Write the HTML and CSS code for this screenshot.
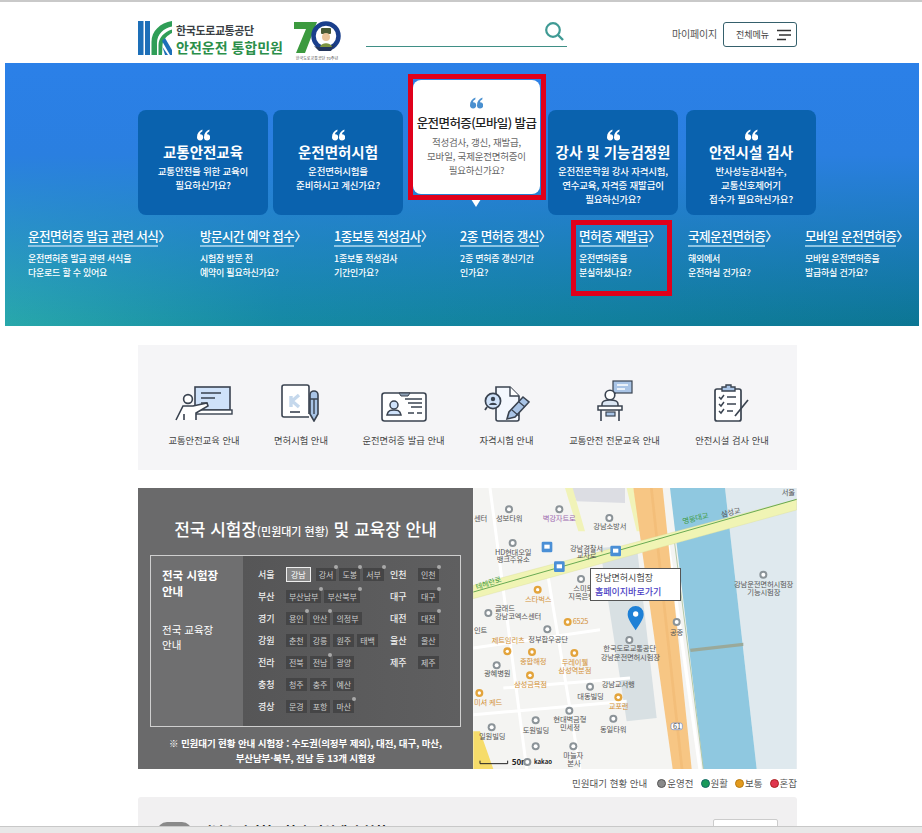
FILE: index.html
```html
<!DOCTYPE html>
<html lang="ko">

<head>
    <meta charset="UTF-8">
    <meta name="viewport" content="width=device-width, initial-scale=1.0">
    <title>안전운전 통합민원</title>
    <link rel="stylesheet" href="styles.css">
</head>

<body>
    <svg class="sprite" width="0" height="0">
        <symbol id="quote" viewBox="0 0 13 11">
            <path d="M0 7.7C0 4 2 1.2 5.4 0V1.8C3.9 2.6 3.2 3.6 3 4.7A3.1 3.1 0 1 1 0 7.7Z" />
            <path d="M7 7.7C7 4 9 1.2 12.4 0V1.8C10.9 2.6 10.2 3.6 10 4.7A3.1 3.1 0 1 1 7 7.7Z" />
        </symbol>
    </svg>

    <header class="site-header">
        <a class="logo">
            <svg class="logo-mark" viewBox="0 0 34 34">
                <rect x="0" y="0" width="5.5" height="34" fill="#1d6fb8" />
                <rect x="7" y="0" width="5" height="34" fill="#1d6fb8" />
                <path d="M13.5 34V21C13.5 10 22 2 34 0V5.5C26 7 19 13 19 22V34Z" fill="#2f9e57" />
                <path d="M20.5 34V24C20.5 17 26 11 34 8.5V12C30 14 25 18 24.5 24L24 34Z" fill="#2f9e57" />
                <path d="M24 20L27 17L34 29V34H32Z" fill="#1d6fb8" />
                <path d="M24.5 26L27 34H30Z" fill="#1d6fb8" />
            </svg>
            <span class="logo-text">
                <span class="logo-org">한국도로교통공단</span>
                <span class="logo-name">안전운전 통합민원</span>
            </span>
            <span class="logo-seventy">
                <svg viewBox="0 0 48 34" width="48" height="34">
                    <path d="M1 1H24L12 32H3L13 8H1Z" fill="#3c9a3f" />
                    <circle cx="33" cy="15" r="12.5" fill="#fff" stroke="#1a3f8c" stroke-width="4.5" />
                    <path d="M21 25C26 27 38 27 43 22L38 30H26Z" fill="#24365c" />
                    <rect x="28" y="7" width="10" height="6" rx="1" fill="#4a5a35" />
                    <circle cx="33" cy="16" r="4" fill="#e9c39a" />
                    <path d="M27 26C28 21 38 21 39 26Z" fill="#7c9440" />
                </svg>
                <small>한국도로교통공단 70주년</small>
            </span>
        </a>
        <div class="search-box">
            <svg viewBox="0 0 20 20" width="20" height="20">
                <circle cx="9" cy="9" r="6.8" fill="none" stroke="#3f9a94" stroke-width="2.2" />
                <path d="M14 14L19 19" stroke="#3f9a94" stroke-width="2.4" />
            </svg>
        </div>
        <a class="mypage">마이페이지</a>
        <button class="menu-btn">전체메뉴
            <svg viewBox="0 0 16 12" width="16" height="12">
                <path d="M1 1.5H15M3 6H15M1 10.5H10" stroke="#333" stroke-width="1.6" />
            </svg>
        </button>
    </header>

    <section class="hero">
        <div class="card-row">
            <div class="card">
                <svg class="quote"><use href="#quote" /></svg>
                <h3>교통안전교육</h3>
                <p>교통안전을 위한 교육이<br>필요하신가요?</p>
            </div>
            <div class="card">
                <svg class="quote"><use href="#quote" /></svg>
                <h3>운전면허시험</h3>
                <p>운전면허시험을<br>준비하시고 계신가요?</p>
            </div>
            <div class="card active">
                <svg class="quote"><use href="#quote" /></svg>
                <h3>운전면허증(모바일) 발급</h3>
                <p>적성검사, 갱신, 재발급,<br>모바일, 국제운전면허증이<br>필요하신가요?</p>
            </div>
            <div class="card">
                <svg class="quote"><use href="#quote" /></svg>
                <h3>강사 및 기능검정원</h3>
                <p>운전전문학원 강사 자격시험,<br>연수교육, 자격증 재발급이<br>필요하신가요?</p>
            </div>
            <div class="card">
                <svg class="quote"><use href="#quote" /></svg>
                <h3>안전시설 검사</h3>
                <p>반사성능검사접수,<br>교통신호제어기<br>접수가 필요하신가요?</p>
            </div>
        </div>

        <div class="link-row">
            <div class="link-item w1">
                <h4><span>운전면허증 발급 관련 서식</span>〉</h4>
                <p>운전면허증 발급 관련 서식을<br>다운로드 할 수 있어요</p>
            </div>
            <div class="link-item w2">
                <h4><span>방문시간 예약 접수</span>〉</h4>
                <p>시험장 방문 전<br>예약이 필요하신가요?</p>
            </div>
            <div class="link-item w3">
                <h4><span>1종보통 적성검사</span>〉</h4>
                <p>1종보통 적성검사<br>기간인가요?</p>
            </div>
            <div class="link-item w4">
                <h4><span>2종 면허증 갱신</span>〉</h4>
                <p>2종 면허증 갱신기간<br>인가요?</p>
            </div>
            <div class="link-item w5">
                <h4><span>면허증 재발급</span>〉</h4>
                <p>운전면허증을<br>분실하셨나요?</p>
            </div>
            <div class="link-item w6">
                <h4><span>국제운전면허증</span>〉</h4>
                <p>해외에서<br>운전하실 건가요?</p>
            </div>
            <div class="link-item w7">
                <h4><span>모바일 운전면허증</span>〉</h4>
                <p>모바일 운전면허증을<br>발급하실 건가요?</p>
            </div>
        </div>

        <!-- annotation boxes from the screenshot -->
        <div class="mark mark-card"></div>
        <div class="mark mark-link"></div>
    </section>

    <main class="content">
        <section class="guide-panel">
            <div class="guide-item">
                <svg viewBox="0 0 58 36" width="58" height="36">
                    <rect x="20" y="1" width="35" height="23" fill="#cfe2fa" stroke="#3a4350" stroke-width="1.6" />
                    <path d="M26 7H46M26 12H40M26 17H32" stroke="#3a4350" stroke-width="1.6" />
                    <rect x="18" y="24" width="39" height="4" fill="#fff" stroke="#3a4350" stroke-width="1.4" />
                    <circle cx="13" cy="13" r="4.4" fill="#fff" stroke="#3a4350" stroke-width="1.6" />
                    <path d="M1 34L8 20H18L32 17L33 20L21 27V34M9 34V28" fill="#fff" stroke="#3a4350" stroke-width="1.6" />
                </svg>
                <span>교통안전교육 안내</span>
            </div>
            <div class="guide-item">
                <svg viewBox="0 0 40 38" width="40" height="38">
                    <path d="M28 30V3A2 2 0 0 0 26 1H3A2 2 0 0 0 1 3V31A2 2 0 0 0 3 33H28" fill="#fff" stroke="#3a4350" stroke-width="1.6" />
                    <path d="M10 12V23M11 17L18 11M11 17L18 23" stroke="#c5d8ec" stroke-width="3.4" fill="none" />
                    <path d="M9 28H19" stroke="#3a4350" stroke-width="1.6" />
                    <path d="M29 11A4 4 0 0 1 37 11V30L33 37L29 30Z" fill="#a9c4e6" stroke="#3a4350" stroke-width="1.6" />
                    <path d="M29 15H37M33 15V30" stroke="#3a4350" stroke-width="1.4" />
                </svg>
                <span>면허시험 안내</span>
            </div>
            <div class="guide-item">
                <svg viewBox="0 0 46 32" width="46" height="32">
                    <rect x="1" y="3" width="44" height="28" rx="2.5" fill="#fff" stroke="#3a4350" stroke-width="1.6" />
                    <path d="M18 3L20 6H27L29 3Z" fill="#8da0b5" stroke="#3a4350" stroke-width="1" />
                    <circle cx="13" cy="15" r="4" fill="#cfe2fa" stroke="#3a4350" stroke-width="1.5" />
                    <path d="M6 25C7 20 10 20 13 20S19 20 20 25Z" fill="#cfe2fa" stroke="#3a4350" stroke-width="1.5" />
                    <path d="M24 9H41M27 13H41M30 17H41M27 23H33M36 23H41" stroke="#3a4350" stroke-width="1.4" />
                </svg>
                <span>운전면허증 발급 안내</span>
            </div>
            <div class="guide-item">
                <svg viewBox="0 0 46 36" width="46" height="36">
                    <path d="M12 1H26L35 10V33A2 2 0 0 1 33 35H14A2 2 0 0 1 12 33Z" fill="#f4f8fe" stroke="#3a4350" stroke-width="1.6" />
                    <path d="M26 1V10H35" fill="#fff" stroke="#3a4350" stroke-width="1.4" />
                    <circle cx="9" cy="15" r="7.6" fill="#cfe2fa" stroke="#3a4350" stroke-width="1.7" />
                    <circle cx="9" cy="13" r="2.2" fill="#3a4350" />
                    <path d="M5 19C6 16 12 16 13 19Z" fill="#3a4350" />
                    <path d="M3 21L1 24" stroke="#3a4350" stroke-width="1.8" />
                    <path d="M39 11L45 16L31 31L23 33L25 26Z" fill="#a9c4e6" stroke="#3a4350" stroke-width="1.6" />
                    <path d="M28 24L35 30M35 16L41 21" stroke="#3a4350" stroke-width="1.2" />
                </svg>
                <span>자격시험 안내</span>
            </div>
            <div class="guide-item">
                <svg viewBox="0 0 36 42" width="36" height="42">
                    <rect x="16" y="1" width="19" height="12" fill="#a9c4e6" stroke="#3a4350" stroke-width="1.2" />
                    <path d="M20 5H31M20 9H28" stroke="#fff" stroke-width="1.3" />
                    <path d="M16 13L13 17L19 13" fill="#a9c4e6" stroke="#3a4350" stroke-width="1" />
                    <circle cx="13" cy="15" r="4.8" fill="#fff" stroke="#3a4350" stroke-width="1.6" />
                    <path d="M5 26V24C5 21 9 20 13 20S21 21 21 24V26" fill="#dbe6f3" stroke="#3a4350" stroke-width="1.5" />
                    <path d="M1 26H25V30H1Z" fill="#fff" stroke="#3a4350" stroke-width="1.5" />
                    <path d="M4 30V41M22 30V41" stroke="#3a4350" stroke-width="1.6" />
                    <rect x="9" y="32" width="9" height="4" fill="#a9c4e6" stroke="#3a4350" stroke-width="1.2" />
                </svg>
                <span>교통안전 전문교육 안내</span>
            </div>
            <div class="guide-item">
                <svg viewBox="0 0 36 38" width="36" height="38">
                    <rect x="1" y="5" width="26" height="32" rx="2" fill="#fff" stroke="#3a4350" stroke-width="1.7" />
                    <path d="M8 7V3H12V1H17V3H21V7Z" fill="#a9c4e6" stroke="#3a4350" stroke-width="1.4" />
                    <path d="M5 13L7 15L10 11M5 20L7 22L10 18M5 27L7 29L10 25" fill="none" stroke="#3a4350" stroke-width="1.5" />
                    <path d="M13 13H22M13 20H22M13 27H19" stroke="#3a4350" stroke-width="1.5" />
                    <path d="M34 16L21 32" stroke="#3a4350" stroke-width="1.7" />
                </svg>
                <span>안전시설 검사 안내</span>
            </div>
        </section>

        <section class="center-panel">
            <div class="center-info">
                <h2>전국 시험장<small>(민원대기 현황)</small> 및 교육장 안내</h2>
                <div class="center-box">
                    <div class="center-side">
                        <strong>전국 시험장<br>안내</strong>
                        <span>전국 교육장<br>안내</span>
                    </div>
                    <div class="center-list">
                        <div class="area-col">
                            <div class="area"><b>서울</b><i class="on">강남</i><i class="dot">강서</i><i class="dot">도봉</i><i class="dot">서부</i></div>
                            <div class="area"><b>부산</b><i class="dot">부산남부</i><i class="dot">부산북부</i></div>
                            <div class="area"><b>경기</b><i class="dot">용인</i><i class="dot">안산</i><i>의정부</i></div>
                            <div class="area"><b>강원</b><i>춘천</i><i>강릉</i><i>원주</i><i>태백</i></div>
                            <div class="area"><b>전라</b><i>전북</i><i class="dot">전남</i><i>광양</i></div>
                            <div class="area"><b>충청</b><i>청주</i><i>충주</i><i>예산</i></div>
                            <div class="area"><b>경상</b><i>문경</i><i>포항</i><i class="dot">마산</i></div>
                        </div>
                        <div class="area-col">
                            <div class="area"><b>인천</b><i class="dot">인천</i></div>
                            <div class="area"><b>대구</b><i class="dot">대구</i></div>
                            <div class="area"><b>대전</b><i class="dot">대전</i></div>
                            <div class="area"><b>울산</b><i>울산</i></div>
                            <div class="area"><b>제주</b><i>제주</i></div>
                        </div>
                    </div>
                </div>
                <p class="center-note">※ 민원대기 현황 안내 시험장 : 수도권(의정부 제외), 대전, 대구, 마산,<br>부산남부·북부, 전남 등 13개 시험장</p>
            </div>

            <div class="map">
                <svg class="map-svg" viewBox="10 0 970 843">
                    <defs>
                        <g id="poi"><circle r="12" fill="#8b9398" /><circle r="6" fill="#fff" /></g>
                        <g id="poi-o"><circle r="12" fill="#e3a43c" /><circle r="5" fill="#fff" /></g>
                        <g id="bus"><rect x="-16" y="-16" width="32" height="32" rx="4" fill="#4a8fd6" /><rect x="-8" y="-7" width="16" height="12" fill="#fff" /></g>
                    </defs>
                    <rect x="10" y="0" width="970" height="843" fill="#f4f4f2" />
                    <!-- river and bank -->
                    <path d="M765 0H980V843H860Z" fill="#dfe9ee" />
                    <path d="M600 0H765L860 843H700Z" fill="#8fc8e0" />
                    <path d="M660 482L820 464V474L662 492Z" fill="#9aa99a" />
                    <!-- blocks and side roads -->
                    <path d="M390 180L500 170L560 690L470 700Z" fill="#d8e0e3" />
                    <path d="M300 0H465V45L320 40Z" fill="#dcdde3" />
                    <path d="M10 730H30L70 843H10Z" fill="#f6dc6a" />
                    <path d="M60 0L170 843M230 240L330 843M10 480L390 425M100 600L480 570M10 680L470 640" stroke="#fff" stroke-width="9" fill="none" />
                    <path d="M590 140L690 843" stroke="#fff" stroke-width="10" fill="none" />
                    <path d="M612 150L700 843" stroke="#b5c9a8" stroke-width="3" fill="none" />
                    <!-- main roads -->
                    <path d="M285 0H308L345 130H325Z" fill="#f1f3b8" />
                    <path d="M470 0H490L520 130H500Z" fill="#f1f3b8" />
                    <path d="M490 0H578L665 843H608Z" fill="#f7c684" />
                    <path d="M540 0H548L640 843H632Z" fill="#eeb26a" opacity="0.4" />
                    <path d="M10 292L980 34V66L10 332Z" fill="#f0f4b4" stroke="#d8dc9c" stroke-width="1" />
                    <path d="M10 312L980 34" stroke="#4d9a3e" stroke-width="2.5" />
                    <text x="640" y="108" class="m g" transform="rotate(-14 640 108)">영동대교</text>
                    <text x="755" y="88" class="m" transform="rotate(-14 755 88)">삼성교</text>
                    <text x="935" y="22" class="m">서울</text>
                    <text x="20" y="305" class="m g" transform="rotate(-18 20 305)">테헤란로</text>

                    <use href="#poi" x="117" y="64" /><text x="78" y="98" class="m">성보타워</text><text x="12" y="100" class="m">센터</text>
                    <use href="#poi" x="268" y="64" /><text x="218" y="98" class="m pu">벽강자트로</text>
                    <use href="#poi" x="418" y="90" /><text x="370" y="124" class="m">강남소방서</text>
                    <use href="#poi" x="128" y="165" /><text x="75" y="200" class="m">HD현대오일</text><text x="80" y="222" class="m">뱅크주유소</text>
                    <use href="#bus" x="231" y="177" /><use href="#bus" x="437" y="189" /><use href="#bus" x="268" y="236" />
                    <text x="300" y="188" class="m">강남경찰서</text><text x="320" y="210" class="m">교차로</text>
                    <use href="#poi" x="333" y="273" /><text x="310" y="310" class="m">스미토</text><text x="295" y="332" class="m">지옥은행</text>
                    <use href="#poi-o" x="203" y="305" /><text x="165" y="342" class="m o">스타벅스</text>
                    <use href="#poi" x="55" y="375" /><text x="75" y="370" class="m">글래드</text><text x="75" y="392" class="m">강남코엑스센터</text>
                    <use href="#poi-o" x="293" y="402" /><text x="308" y="409" class="m o">6525</text>
                    <use href="#poi" x="232" y="424" /><text x="175" y="462" class="m">정부합우공단</text>
                    <text x="65" y="465" class="m o">제트임리츠</text><use href="#poi-o" x="112" y="490" />
                    <text x="12" y="435" class="m">인트</text>
                    <use href="#poi-o" x="186" y="492" /><text x="150" y="528" class="m o">종합해정</text>
                    <use href="#poi-o" x="313" y="495" /><text x="275" y="532" class="m o">두레이웰</text><text x="265" y="555" class="m o">삼성역분점</text>
                    <use href="#poi" x="80" y="532" /><text x="42" y="565" class="m">광혜병원</text>
                    <use href="#poi-o" x="180" y="562" /><text x="132" y="598" class="m o">삼성금욕점</text>
                    <use href="#poi" x="360" y="596" /><text x="395" y="597" class="m">강남교서행</text><text x="322" y="632" class="m">대동빌딩</text>
                    <use href="#poi-o" x="28" y="615" /><text x="12" y="652" class="m o">미셔 케드</text>
                    <use href="#poi-o" x="445" y="628" /><text x="416" y="662" class="m o">교포런</text>
                    <use href="#poi" x="298" y="668" /><text x="250" y="702" class="m">현대벽금형</text><text x="270" y="727" class="m">민세정</text>
                    <use href="#poi" x="197" y="697" /><text x="158" y="734" class="m">도원빌딩</text>
                    <use href="#poi" x="430" y="692" /><text x="390" y="732" class="m">동일타워</text>
                    <use href="#poi" x="65" y="718" /><text x="27" y="754" class="m">일원빌딩</text>
                    <use href="#poi" x="197" y="775" />
                    <use href="#poi" x="310" y="775" /><text x="280" y="811" class="m">마늘자</text><text x="292" y="835" class="m">본사</text>
                    <use href="#poi" x="620" y="402" /><text x="600" y="440" class="m">공종</text>
                    <use href="#poi" x="478" y="456" /><text x="400" y="490" class="m">한국도로교통공단</text><text x="392" y="515" class="m">강남운전면허시험장</text>
                    <use href="#poi" x="880" y="260" /><text x="792" y="296" class="m">강남운전면허시험장</text><text x="832" y="320" class="m">기능시험장</text>
                    <rect x="603" y="705" width="34" height="20" rx="6" fill="#fff" stroke="#6d86c8" stroke-width="2" />
                    <text x="609" y="722" class="m" fill="#3957a8">61</text>
                    <path d="M30 818V827H113V818" fill="none" stroke="#222" stroke-width="3" />
                    <text x="125" y="832" class="scale">50m</text>
                    <use href="#poi" x="172" y="822" />
                    <text x="192" y="828" class="scale kakao">kakao</text>
                    <!-- marker -->
                    <path d="M497 427C480 400 473 392 473 378A24 24 0 0 1 521 378C521 392 514 400 497 427Z" fill="#1e80d6" />
                    <circle cx="497" cy="378" r="8" fill="#fff" />
                </svg>
                <div class="map-tip">
                    <span>강남면허시험장</span>
                    <a>홈페이지바로가기</a>
                </div>
            </div>
        </section>

        <div class="legend">
            <span class="legend-title">민원대기 현황 안내</span>
            <span class="legend-item"><i class="gray"></i>운영전</span>
            <span class="legend-item"><i class="green"></i>원활</span>
            <span class="legend-item"><i class="orange"></i>보통</span>
            <span class="legend-item"><i class="red"></i>혼잡</span>
        </div>

        <section class="status-panel">
            <span class="status-pill"></span>
            <h3>전남운전면허시험장 민원대기 현황</h3>
            <span class="status-btn"></span>
        </section>
    </main>

    <div class="bottom-bar"></div>
</body>

</html>
```

FILE: styles.css
```css
/* General Reset */
* {
    margin: 0;
    padding: 0;
    box-sizing: border-box;
}

html,
body {
    height: 833px;
    overflow: hidden;
}

body {
    font-family: "Noto Sans CJK KR", "Noto Sans", sans-serif;
    background: #fff;
    color: #333;
    border-top: 2px solid #c9c9c9;
}

.sprite {
    display: block;
}

/* Header */
.site-header {
    display: flex;
    align-items: flex-start;
    height: 61px;
    padding: 19px 0 0 138px;
}

.logo {
    display: flex;
    width: 228px;
}

.logo-mark {
    width: 34px;
    height: 34px;
}

.logo-text {
    display: flex;
    flex-direction: column;
    margin-left: 4px;
    width: 117px;
    white-space: nowrap;
}

.logo-org {
    font-size: 11px;
    line-height: 15px;
    font-weight: 700;
    letter-spacing: -0.4px;
    color: #3a3f44;
    margin-top: 2px;
}

.logo-name {
    font-size: 14px;
    line-height: 18px;
    font-weight: 700;
    letter-spacing: 0;
    color: #2b8f4a;
}

.logo-seventy {
    display: flex;
    flex-direction: column;
    align-items: center;
    width: 48px;
    white-space: nowrap;
}

.logo-seventy small {
    font-size: 4px;
    line-height: 6px;
    color: #555;
}

.search-box {
    display: flex;
    justify-content: flex-end;
    width: 201px;
    height: 26px;
    padding-right: 3px;
    border-bottom: 1px solid #3f8f86;
    margin-left: 0;
}

.mypage {
    font-size: 10px;
    line-height: 26px;
    color: #555;
    letter-spacing: -0.2px;
    margin-left: 105px;
    white-space: nowrap;
}

.menu-btn {
    display: flex;
    align-items: center;
    justify-content: space-between;
    width: 74px;
    height: 25px;
    margin: 1px 0 0 6px;
    padding: 0 4px 0 12px;
    background: #fff;
    border: 1px solid #35606c;
    border-radius: 3px;
    font-family: inherit;
    font-size: 9px;
    color: #444;
    white-space: nowrap;
}

/* Hero */
.hero {
    position: relative;
    height: 263px;
    margin: 0 3px 0 5px;
    background:
        linear-gradient(to bottom, #2b80e8 0%, #2a7fe0 35%, rgba(42, 127, 224, 0) 100%),
        linear-gradient(to right, #28a8aa 0%, #158aa3 30%, #0c7693 100%);
}

.card-row {
    display: flex;
    align-items: flex-start;
    padding: 17px 0 0 133px;
}

.card {
    position: relative;
    width: 130px;
    height: 105px;
    margin: 30px 5px 0 0;
    padding-top: 19px;
    background: #0a62ae;
    border-radius: 8px;
    color: #fff;
    text-align: center;
}

.card:nth-child(4) {
    margin-right: 8px;
}

.quote {
    display: block;
    width: 13px;
    height: 12px;
    margin: 0 auto 1px;
    fill: #fff;
}

.card h3 {
    font-size: 14.5px;
    line-height: 20px;
    font-weight: 700;
    white-space: nowrap;
}

.card p {
    font-size: 9.5px;
    line-height: 14px;
    font-weight: 500;
    letter-spacing: -0.2px;
    margin-top: 2px;
    white-space: nowrap;
}

.card.active {
    width: 127px;
    height: 114px;
    margin: 0 8px 0 5px;
    padding-top: 17px;
    background: #fff;
    color: #222;
}

.card.active .quote {
    fill: #4a90d0;
}

.card.active h3 {
    font-size: 12.5px;
    font-weight: 500;
    letter-spacing: -0.6px;
    margin-top: 4px;
}

.card.active p {
    color: #666;
    font-weight: 400;
}

.card.active::after {
    content: "";
    position: absolute;
    left: 58px;
    bottom: -13px;
    border-left: 5px solid transparent;
    border-right: 5px solid transparent;
    border-top: 8px solid #fff;
}

.link-row {
    display: flex;
    gap: 29px;
    margin-top: 12px;
    padding-left: 23px;
    color: #fff;
}

.link-item {
    flex: none;
    white-space: nowrap;
}

.w1 { width: 143px; }
.w2 { width: 105px; }
.w3 { width: 97px; }
.w4 { width: 90px; }
.w5 { width: 80px; }
.w6 { width: 88px; }
.w7 { width: 102px; }

.link-item h4 {
    font-size: 12.6px;
    line-height: 17px;
    font-weight: 500;
    letter-spacing: -0.55px;
    display: flex;
}

.link-item h4 span {
    border-bottom: 2px solid #8cc4e4;
    padding-bottom: 1px;
}

.link-item p {
    font-size: 9px;
    line-height: 14px;
    font-weight: 500;
    letter-spacing: -0.25px;
    margin-top: 5px;
}

.mark {
    position: absolute;
    border: 5px solid #e0001b;
}

.mark-card {
    left: 403px;
    top: 11px;
    width: 138px;
    height: 126px;
}

.mark-link {
    left: 566px;
    top: 157px;
    width: 101px;
    height: 76px;
}

/* Content */
.content {
    width: 659px;
    margin: 19px 0 0 138px;
}

.guide-panel {
    display: flex;
    gap: 34px;
    height: 125px;
    padding-left: 30px;
    background: #f5f5f7;
}

.guide-item {
    flex: none;
    display: flex;
    flex-direction: column;
    align-items: center;
    justify-content: flex-end;
    height: 102px;
}

.guide-item span {
    margin-top: 12px;
    font-size: 9.3px;
    line-height: 13px;
    color: #444;
    white-space: nowrap;
}

.guide-item:nth-child(1) { width: 72px; }
.guide-item:nth-child(2) { width: 54px; }
.guide-item:nth-child(3) { width: 83px; }
.guide-item:nth-child(4) { width: 55px; }
.guide-item:nth-child(5) { width: 93px; }
.guide-item:nth-child(6) { width: 74px; }

.center-panel {
    display: flex;
    height: 281px;
    margin-top: 18px;
}

.center-info {
    width: 335px;
    padding: 28px 12px 0;
    background: #6a6a6b;
    color: #fff;
    text-align: center;
}

.center-info h2 {
    font-size: 17px;
    line-height: 25px;
    font-weight: 500;
    white-space: nowrap;
}

.center-info h2 small {
    font-size: 11px;
    font-weight: 500;
}

.center-box {
    display: flex;
    height: 172px;
    margin-top: 11px;
    border: 1px solid #cfcfcf;
    text-align: left;
}

.center-side {
    display: flex;
    flex-direction: column;
    width: 92px;
    padding: 11px 0 0 11px;
    background: #6f6f70;
}

.center-side strong {
    font-size: 11.5px;
    line-height: 16px;
    font-weight: 700;
}

.center-side span {
    margin-top: 23px;
    font-size: 10.5px;
    line-height: 15px;
}

.center-list {
    flex: 1;
    display: flex;
    padding: 10px 0 0 15px;
    background: linear-gradient(to right, #565657, #5f5f60);
}

.area-col {
    display: flex;
    flex-direction: column;
    gap: 6px;
}

.area-col:first-child {
    width: 132px;
}

.area {
    display: flex;
    align-items: center;
    gap: 3px;
    height: 16px;
    white-space: nowrap;
}

.area b {
    width: 23px;
    margin-right: 2px;
    font-size: 9px;
    font-weight: 500;
    color: #eee;
}

.area i {
    position: relative;
    padding: 0 3px;
    height: 13px;
    background: #454546;
    font-size: 8px;
    font-style: normal;
    line-height: 13px;
    color: #ccc;
}

.area i.on {
    padding: 0 4px;
    height: 15px;
    line-height: 13px;
    margin-right: 2px;
    background: #888;
    border: 1px solid #eee;
    color: #fff;
}

.area i.dot::after {
    content: "";
    position: absolute;
    top: -3px;
    right: -2px;
    width: 4px;
    height: 4px;
    border-radius: 50%;
    background: #a9a9a9;
}

.center-note {
    margin-top: 9px;
    font-size: 9.5px;
    line-height: 14.5px;
    font-weight: 700;
    letter-spacing: -0.1px;
    white-space: nowrap;
}

.map {
    position: relative;
    width: 324px;
    overflow: hidden;
}

.map-svg {
    display: block;
    width: 324px;
    height: 281px;
}

.map-svg .m {
    font-size: 22px;
    fill: #555;
    letter-spacing: -0.5px;
}

.map-svg .o {
    fill: #d3923a;
}

.map-svg .pu {
    fill: #a06ab0;
}

.map-svg .g {
    fill: #3e9a3e;
}

.map-svg .scale {
    font-size: 24px;
    font-weight: 700;
    fill: #222;
}

.map-svg .kakao {
    font-size: 18px;
}

.map-tip {
    position: absolute;
    left: 117px;
    top: 80px;
    width: 91px;
    height: 33px;
    padding: 2px 0 0 4px;
    background: #fff;
    border: 1px solid #555;
    font-size: 9px;
    line-height: 14px;
    color: #444;
    white-space: nowrap;
}

.map-tip span,
.map-tip a {
    display: block;
}

.map-tip a {
    color: #4b3fc4;
    font-weight: 500;
}

.legend {
    display: flex;
    justify-content: flex-end;
    align-items: center;
    height: 28px;
    font-size: 9.5px;
    color: #555;
    white-space: nowrap;
}

.legend-title {
    margin-right: 10px;
}

.legend-item {
    display: flex;
    align-items: center;
    margin-left: 7px;
}

.legend-title + .legend-item {
    margin-left: 0;
}

.legend-item i {
    width: 9px;
    height: 9px;
    border-radius: 50%;
    margin-right: 1px;
    border: 1px solid #555;
}

.legend-item .gray { background: #8a8a8a; }
.legend-item .green { background: #1a9a5a; border-color: #166; }
.legend-item .orange { background: #e39a1c; border-color: #b87a10; }
.legend-item .red { background: #e0364e; border-color: #a22; }

.status-panel {
    position: relative;
    display: flex;
    align-items: flex-start;
    height: 60px;
    padding: 25px 0 0 19px;
    background: #f1f0f1;
    border-radius: 3px 3px 0 0;
}

.status-pill {
    width: 35px;
    height: 20px;
    border-radius: 10px;
    background: #8a8a8a;
}

.status-panel h3 {
    margin: 0 0 0 8px;
    font-size: 13px;
    line-height: 17px;
    font-weight: 700;
    color: #222;
    white-space: nowrap;
}

.status-btn {
    position: absolute;
    left: 575px;
    top: 22px;
    width: 65px;
    height: 24px;
    background: #fff;
    border: 1px solid #ccc;
    border-radius: 2px;
}

.bottom-bar {
    position: fixed;
    left: 0;
    right: 0;
    bottom: 0;
    height: 7px;
    background: #e8e8e8;
    border-top: 1px solid #c8c8c8;
}
```
